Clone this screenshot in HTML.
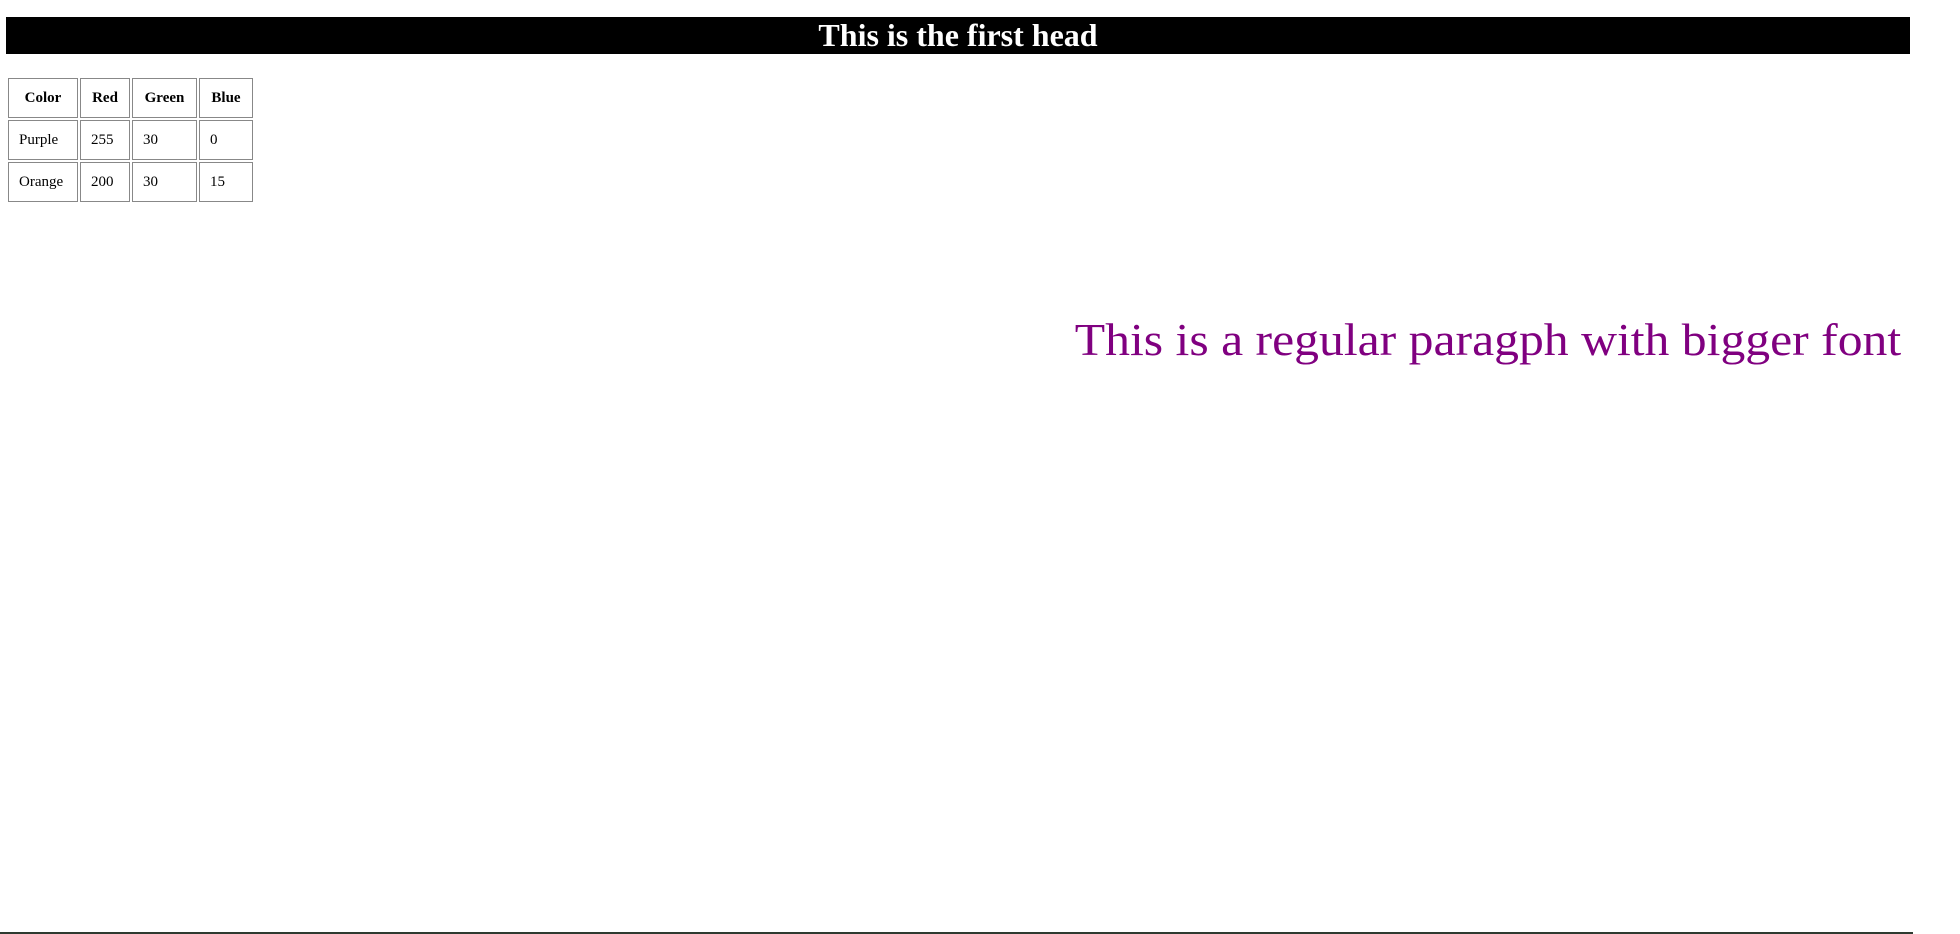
<!DOCTYPE html>
<html><head><meta charset="utf-8"><style>
html,body{margin:0;padding:0;background:#fff;width:1960px;height:934px;overflow:hidden;position:relative;font-family:"Liberation Serif",serif;}
.h{position:absolute;left:6px;top:17px;width:1904px;height:37px;background:#000;color:#fff;font-weight:bold;font-size:32px;line-height:37px;text-align:center;}
table{position:absolute;left:6px;top:76px;border-spacing:2px;font-size:15px;}
td,th{border:1px solid #888;height:40px;padding:0 10px;box-sizing:border-box;text-align:left;}
th{text-align:center;}
.p{position:absolute;right:59px;top:317px;font-size:46px;line-height:46px;color:#800080;white-space:nowrap;transform:scaleX(1.08);transform-origin:right top;}
.b{position:absolute;left:0;top:932px;width:1913px;height:2px;background:#2e3a30;}
</style></head><body>
<div class="h">This is the first head</div>
<table>
<tr><th style="width:70px">Color</th><th style="width:50px">Red</th><th style="width:65px">Green</th><th style="width:54px">Blue</th></tr>
<tr><td>Purple</td><td>255</td><td>30</td><td>0</td></tr>
<tr><td>Orange</td><td>200</td><td>30</td><td>15</td></tr>
</table>
<div class="p">This is a regular paragph with bigger font</div>
<div class="b"></div>
</body></html>
